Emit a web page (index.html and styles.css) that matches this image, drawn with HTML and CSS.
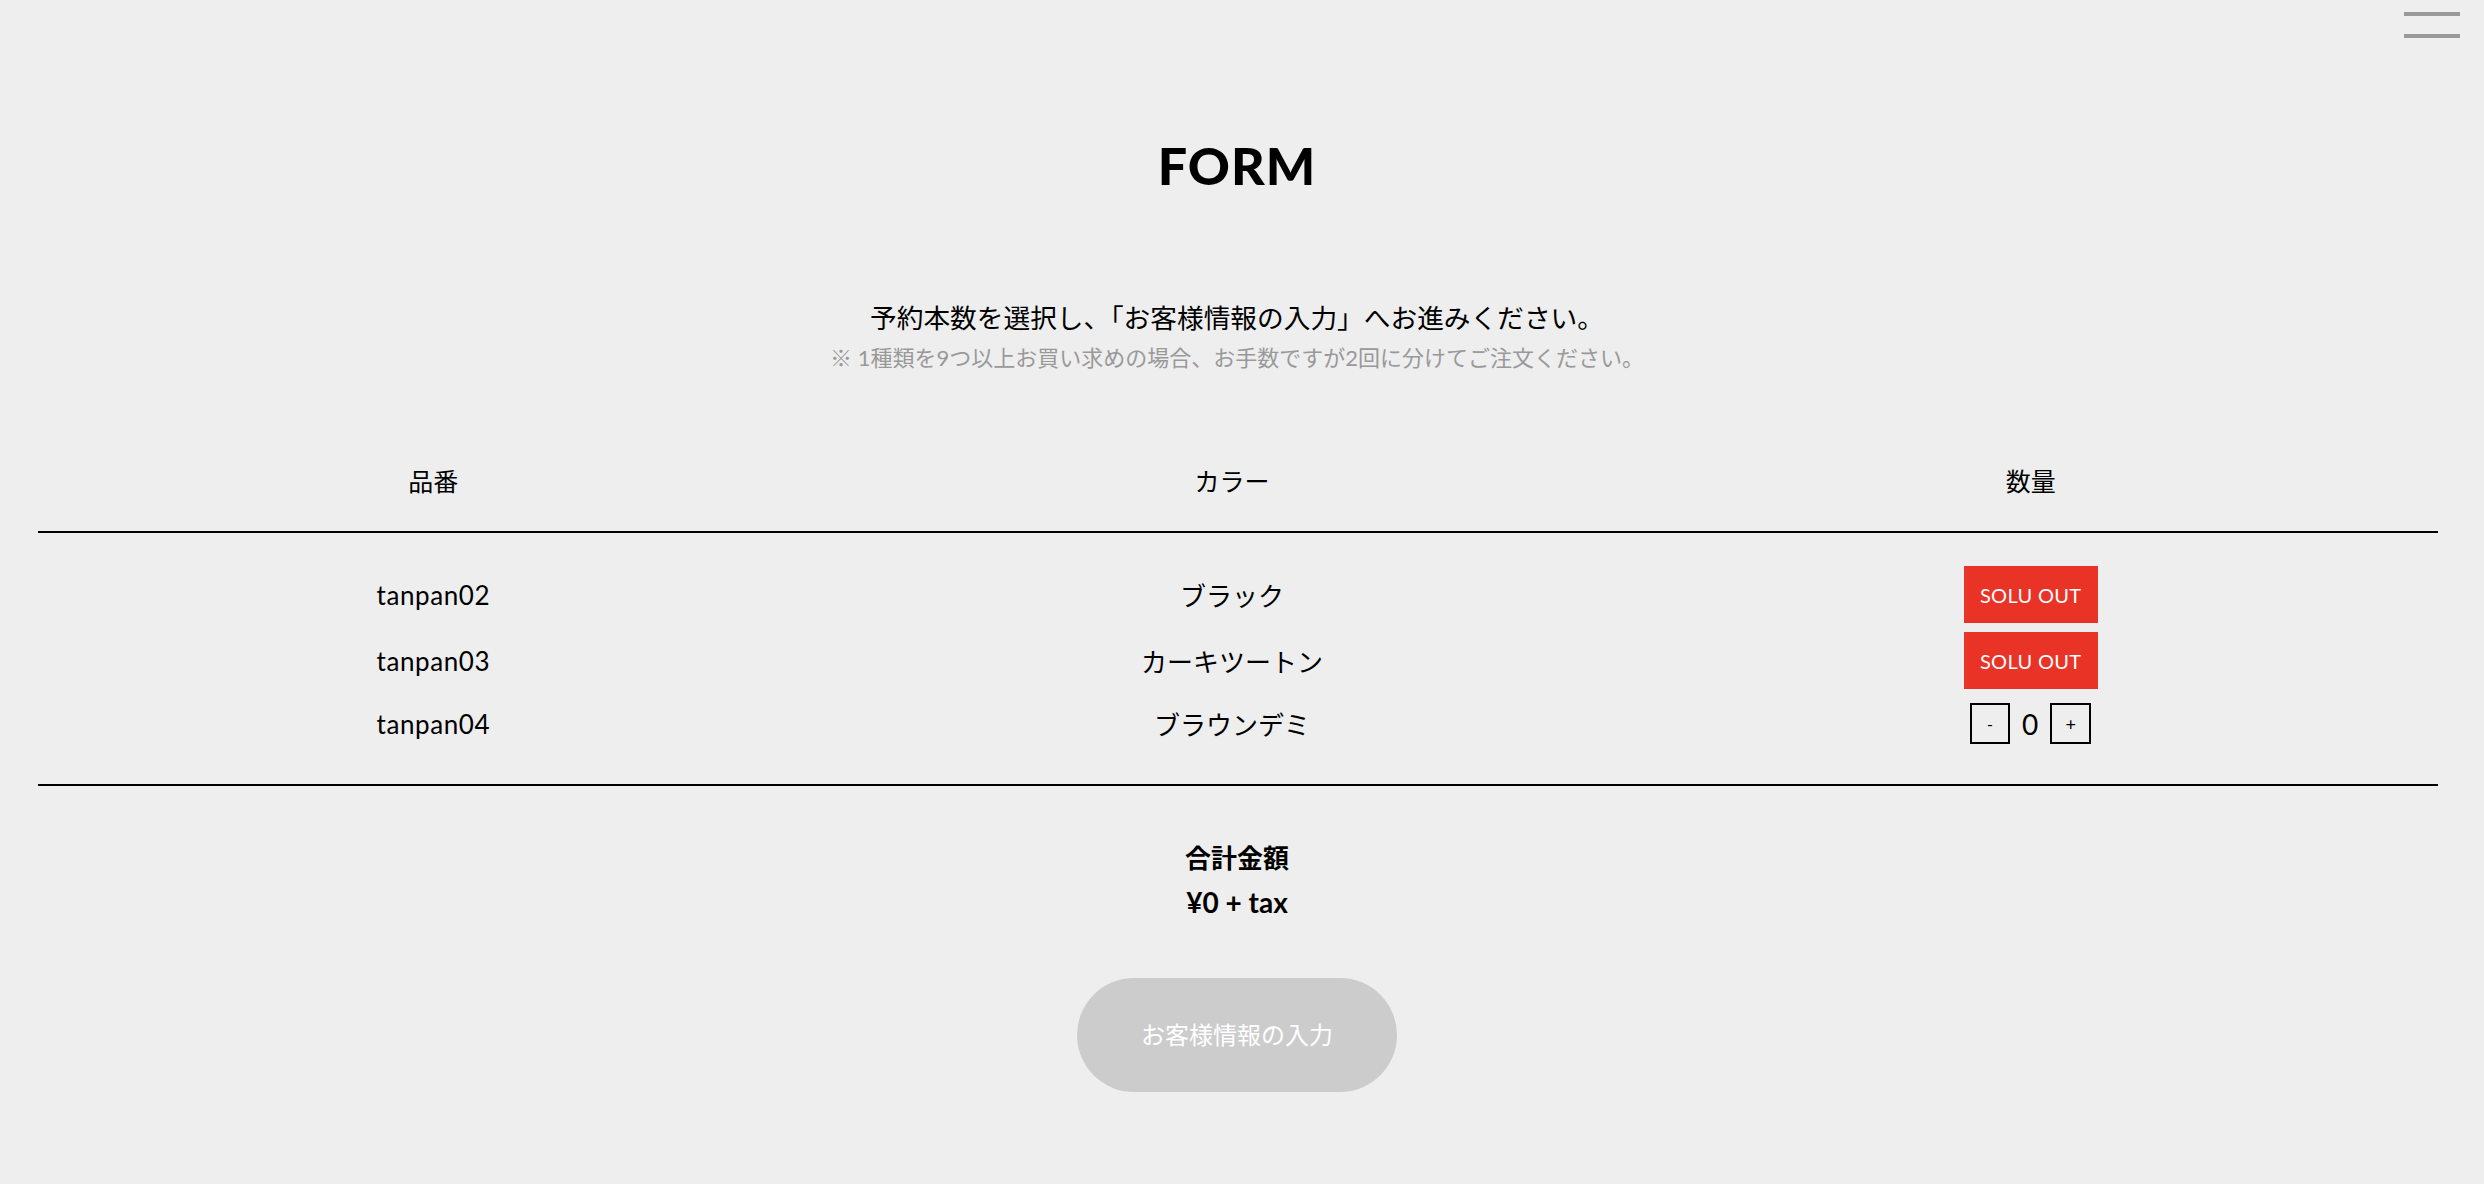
FILE: index.html
```html
<!DOCTYPE html>
<html lang="ja">
<head>
<meta charset="utf-8">
<title>FORM</title>
<link rel="stylesheet" href="styles.css">
</head>
<body>
<button class="menu" aria-label="menu"><span class="menu-line"></span><span class="menu-line"></span></button>
<main class="page">
  <h1 class="title">FORM</h1>
  <p class="lead">予約本数を選択し、「お客様情報の入力」へお進みください。</p>
  <p class="note">※ 1種類を9つ以上お買い求めの場合、お手数ですが2回に分けてご注文ください。</p>

  <section class="table">
    <div class="thead">
      <div class="grid">
        <div class="cell">品番</div>
        <div class="cell">カラー</div>
        <div class="cell">数量</div>
      </div>
    </div>
    <div class="tbody">
      <div class="grid row">
        <div class="cell code">tanpan02</div>
        <div class="cell">ブラック</div>
        <div class="cell"><span class="soldout">SOLU OUT</span></div>
      </div>
      <div class="grid row">
        <div class="cell code">tanpan03</div>
        <div class="cell">カーキツートン</div>
        <div class="cell"><span class="soldout">SOLU OUT</span></div>
      </div>
      <div class="grid row row-last">
        <div class="cell code">tanpan04</div>
        <div class="cell">ブラウンデミ</div>
        <div class="cell">
          <div class="qty">
            <button class="qty-btn">-</button>
            <span class="qty-num">0</span>
            <button class="qty-btn qty-plus">+</button>
          </div>
        </div>
      </div>
    </div>
  </section>

  <div class="total">
    <p class="total-label">合計金額</p>
    <p class="total-price">¥0 + tax</p>
  </div>

  <div class="actions">
    <button class="next">お客様情報の入力</button>
  </div>
</main>
</body>
</html>
```

FILE: styles.css
```css
html, body {
  margin: 0;
  padding: 0;
}

body {
  background: #eeeeee;
  color: #000;
  font-family: "Lato", "Noto Sans CJK JP", sans-serif;
}

.menu {
  position: absolute;
  top: 12px;
  right: 24px;
  width: 56px;
  height: 26px;
  padding: 0;
  border: 0;
  background: transparent;
  display: flex;
  flex-direction: column;
  justify-content: space-between;
  cursor: pointer;
}

.menu-line {
  display: block;
  width: 56px;
  height: 4px;
  background: #999999;
}

.page {
  box-sizing: border-box;
  padding: 139px 10px 92px 0;
}

.title {
  margin: 0;
  text-align: center;
  font-family: "Lato", sans-serif;
  font-weight: 900;
  font-size: 52px;
  line-height: 52px;
  letter-spacing: 1px;
}

.lead {
  margin: 106px 0 0;
  text-align: center;
  font-size: 26.7px;
  line-height: 42px;
}

.note {
  margin: -3px 0 0;
  text-align: center;
  font-size: 22px;
  line-height: 44px;
  color: #999999;
}

.table {
  margin: 81px 0 0 38px;
  width: 2400px;
}

.grid {
  display: grid;
  grid-template-columns: repeat(3, 1fr);
  margin: 0 8px 0 -4px;
}

.cell {
  display: flex;
  align-items: center;
  justify-content: center;
}

.thead {
  border-bottom: 2px solid #000;
  padding-bottom: 30px;
  font-size: 25px;
  line-height: 40px;
}

.tbody {
  border-bottom: 2px solid #000;
  padding: 33px 0 35px;
  display: flex;
  flex-direction: column;
  gap: 9px;
  font-size: 26px;
}

.row {
  height: 57px;
}

.row-last {
  height: 51px;
}

.code {
  letter-spacing: 0.6px;
}

.soldout {
  display: flex;
  align-items: center;
  justify-content: center;
  width: 134px;
  height: 57px;
  background: #e93326;
  color: #fff;
  font-size: 20px;
  letter-spacing: 0.3px;
}

.qty {
  display: flex;
  align-items: center;
  gap: 12px;
}

.qty-btn {
  box-sizing: border-box;
  width: 40px;
  height: 41px;
  border: 2px solid #000;
  background: transparent;
  padding: 0;
  font-family: "Lato", sans-serif;
  font-size: 16px;
  color: #000;
  display: flex;
  align-items: center;
  justify-content: center;
}

.qty-plus {
  width: 41px;
  font-size: 18px;
}

.qty-num {
  font-size: 28px;
  line-height: 28px;
}

.total {
  margin-top: 50px;
  text-align: center;
  font-weight: 700;
}

.total-label,
.total-price {
  margin: 0;
  line-height: 44px;
}

.total-label {
  font-size: 26px;
}

.total-price {
  font-size: 28px;
}

.actions {
  margin-top: 54px;
  display: flex;
  justify-content: center;
}

.next {
  width: 320px;
  height: 114px;
  border: 0;
  border-radius: 57px;
  background: #cccccc;
  color: #fff;
  font-family: "Lato", "Noto Sans CJK JP", sans-serif;
  font-size: 24px;
  padding: 0 0 3px;
}
```
